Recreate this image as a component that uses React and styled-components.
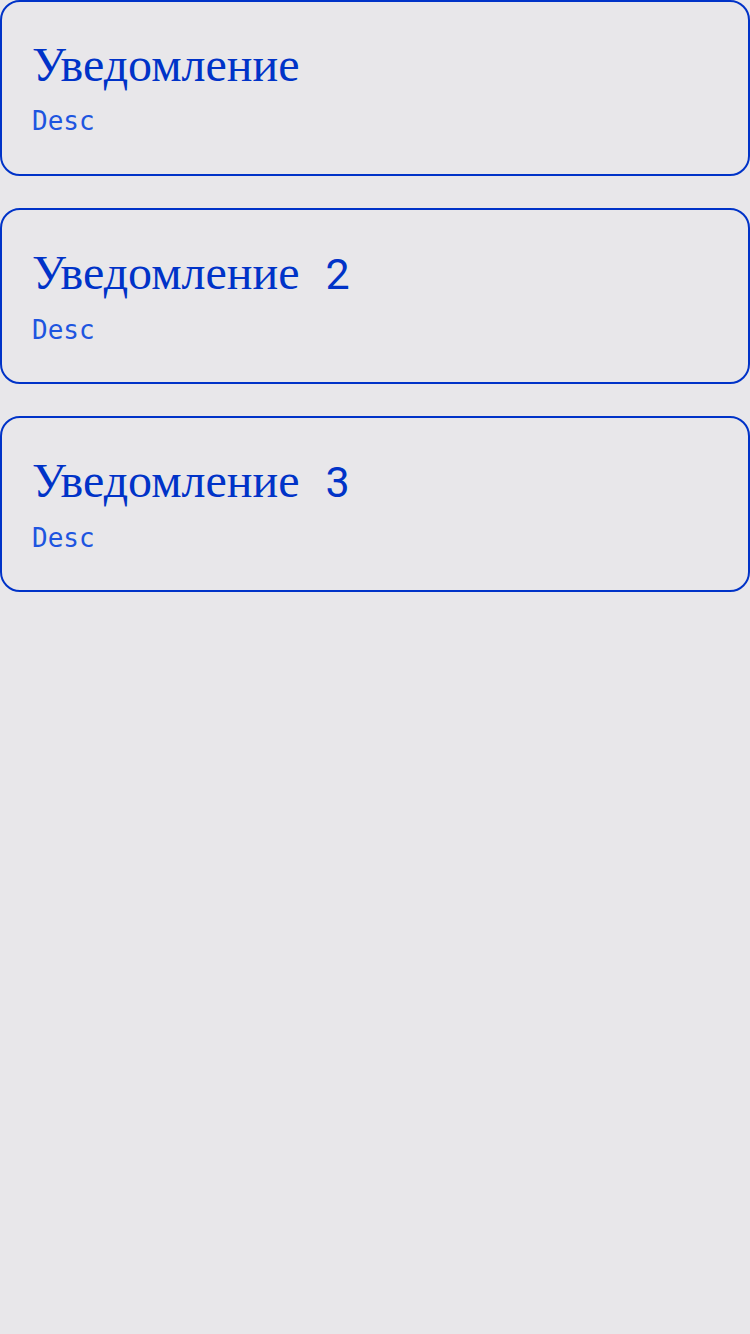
import styled, { createGlobalStyle } from "styled-components"

const GlobalStyle = createGlobalStyle`
  html, body {
    margin: 0;
    padding: 0;
    background-color: #e8e7ea;
  }
`;

const List = styled.div`
    display: flex;
    flex-direction: column;
    gap: 32px;
`;

const Card = styled.div`
    box-sizing: border-box;
    height: 176px;
    padding: 31px 30px;
    border: 2px solid #0033c8;
    border-radius: 20px;
`;

const Title = styled.h2`
    margin: 0;
    font-family: "Liberation Serif", serif;
    font-weight: 400;
    font-size: 48px;
    line-height: 64px;
    color: #0033c8;
`;

const Num = styled.span`
    font-family: Roboto, sans-serif;
    font-size: 43px;
    margin-left: 26px;
`;

const Desc = styled.p`
    margin: 9px 0 0;
    font-family: "DejaVu Sans Mono", monospace;
    font-size: 26px;
    color: #1d55e0;
`;

const items = [
  { id: 1, num: null },
  { id: 2, num: 2 },
  { id: 3, num: 3 },
];

const App = () => {
  return (
    <>
      <GlobalStyle />
      <List>
        {items.map((item) => (
          <Card key={item.id}>
            <Title>
              Уведомление
              {item.num && <Num>{item.num}</Num>}
            </Title>
            <Desc>Desc</Desc>
          </Card>
        ))}
      </List>
    </>
  )
}

export default App
